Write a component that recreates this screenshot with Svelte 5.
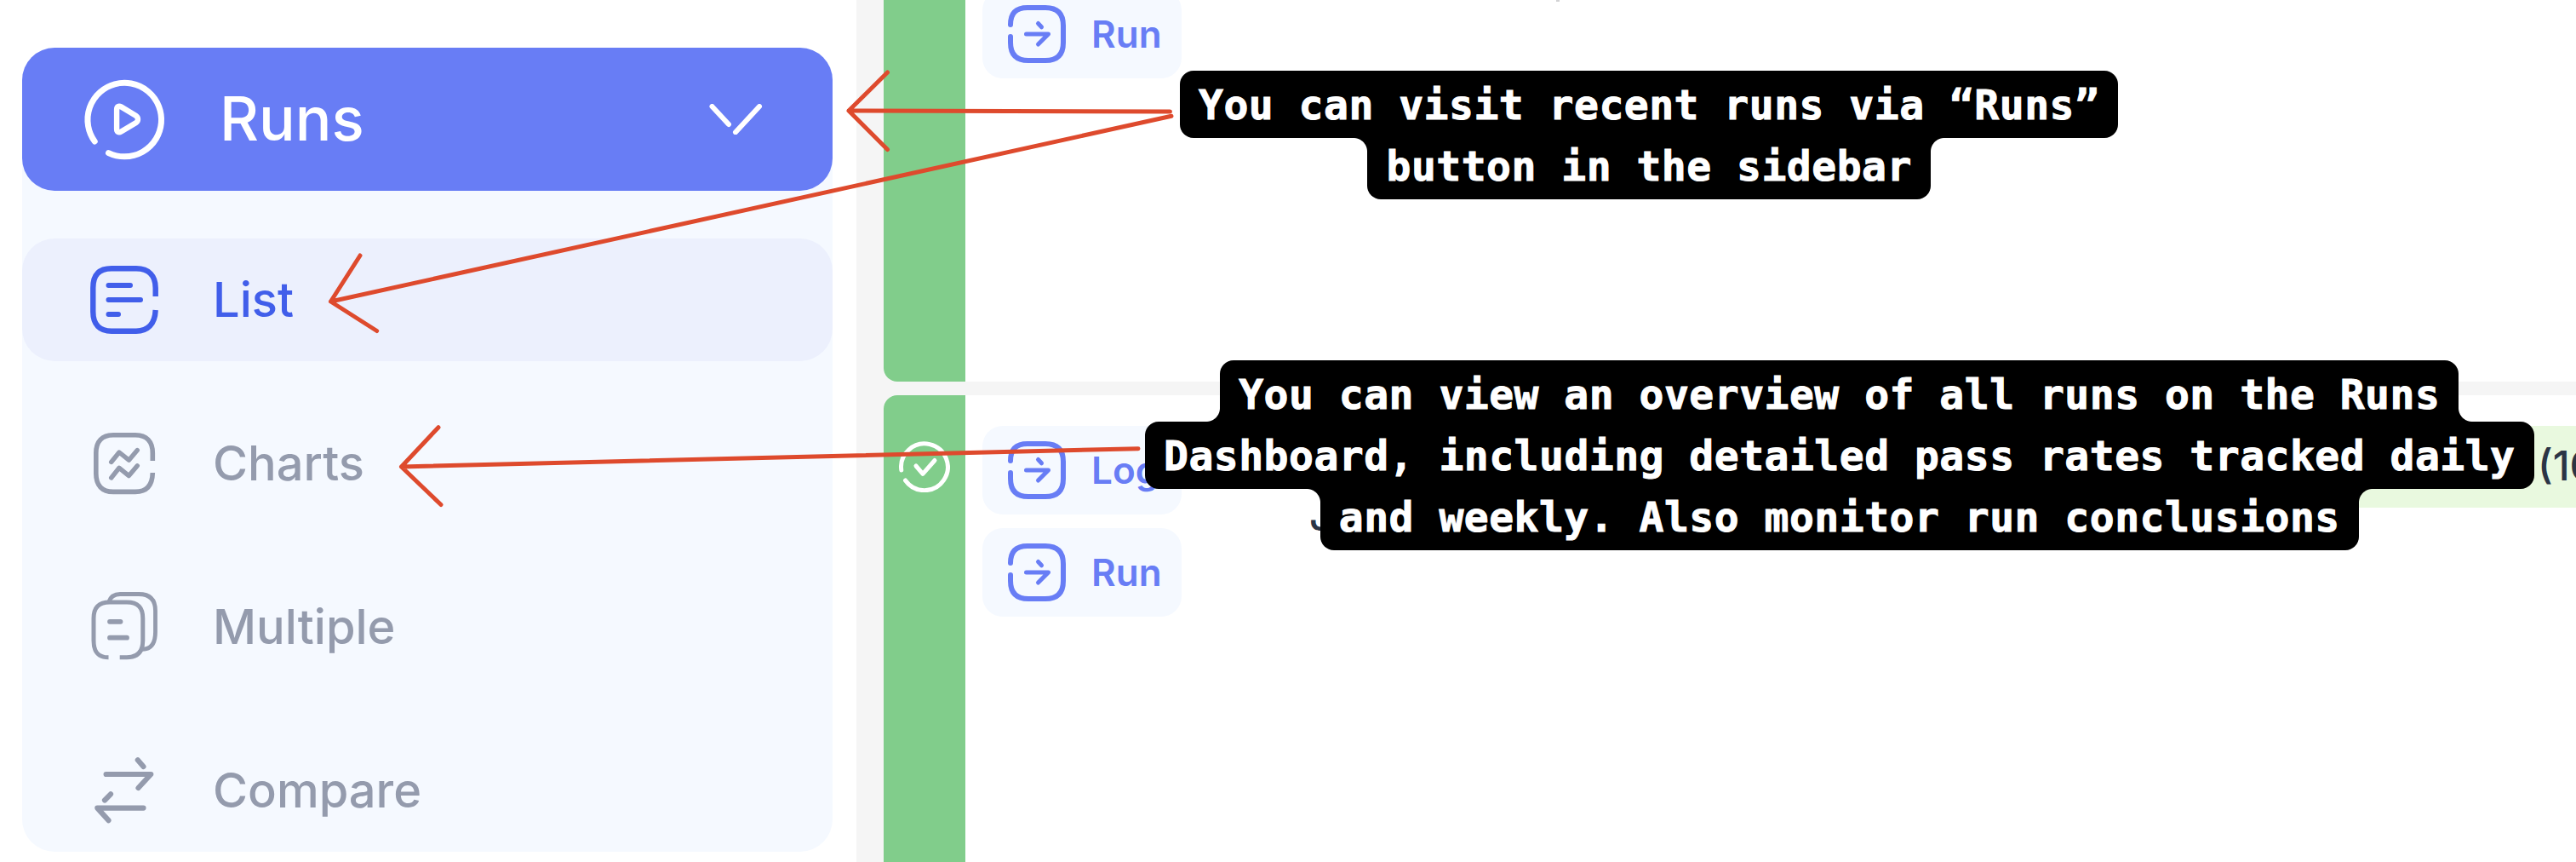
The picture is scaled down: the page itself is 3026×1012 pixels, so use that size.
<script>
  const items = [
    { name: 'List', icon: 'list', active: true },
    { name: 'Charts', icon: 'charts' },
    { name: 'Multiple', icon: 'multiple' },
    { name: 'Compare', icon: 'compare' }
  ];

  // shape of the joint between a line's plate and its neighbours: '', 'down' or 'up'
  const notes = [
    {
      id: 'visit',
      lines: [
        { text: 'You can visit recent runs via “Runs”', joint: '' },
        { text: 'button in the sidebar', joint: 'down' }
      ]
    },
    {
      id: 'overview',
      lines: [
        { text: 'You can view an overview of all runs on the Runs', joint: 'up' },
        { text: 'Dashboard, including detailed pass rates tracked daily', joint: '' },
        { text: 'and weekly. Also monitor run conclusions', joint: 'down' }
      ]
    }
  ];
</script>

{#snippet chip(label)}
  <div class="chip">
    <svg class="chip-icon" viewBox="0 0 68 68">
      <path d="M3 23C3 9 10 3 23 3H44C58 3 65 10 65 24V44C65 58 58 65 44 65H24C10 65 3 58 3 44V37" />
      <path class="thin" d="M21.5 34H47.5L35.5 46M35.5 21.5L39.5 25.8" />
    </svg>
    <span>{label}</span>
  </div>
{/snippet}

<div class="page">
  <aside class="sidebar">
    <nav class="menu">
      <div class="head">
        <svg class="icon" viewBox="0 0 96 96">
          <path stroke-width="7" d="M13.2 74A43.3 43.3 0 1 1 29.5 87.6" />
          <path stroke-width="6.4" d="M39.1 36.5C39.1 33 41.5 31.8 44.3 33.4L61.5 43.7C64.8 45.8 64.8 50.2 61.5 52.3L44.3 62.6C41.5 64.2 39.1 63 39.1 59.5Z" />
        </svg>
        <span class="head-label">Runs</span>
        <svg class="chevron" viewBox="0 0 66 36">
          <path d="M4.5 3L24 24M60 3L32 33.2" />
        </svg>
      </div>
      {#each items as item}
        <div class="item" class:active={item.active}>
          <svg class="icon" viewBox="0 0 96 96">
            {#if item.icon === 'list'}
              <path stroke-width="6.4" stroke-linecap="butt" d="M84.7 44V34C84.7 20 77 11.3 62 11.3H33C18 11.3 11.3 19 11.3 34V62C11.3 77 19 84.7 33 84.7H62C75 84.7 84 77 84.7 60" />
              <path stroke-width="6" d="M29.5 31H55M29.5 48H67M29.5 65H41" />
            {:else if item.icon === 'charts'}
              <path stroke-width="5.6" stroke-linecap="butt" d="M81.3 45V36C81.3 22 74 14.8 61 14.8H35C22 14.8 14.8 22 14.8 36V60C14.8 74 22 81.4 35 81.4H61C74 81.4 81 74 81.3 59" />
              <path stroke-width="5.4" d="M32.7 46.5L42 35L53.4 44.2L63.3 32.5M32.7 65L42 53.3L53.4 62.6L63.3 50.8" />
            {:else if item.icon === 'multiple'}
              <path stroke-width="5" stroke-linecap="butt" d="M29.5 83.8C17 83.8 12 77 12 64V38C12 25 18 19 31 19H51C64 19 69.8 25 69.8 38V64C69.8 77 64 83.8 51 83.8H42.7" />
              <path stroke-width="4.8" stroke-linecap="butt" d="M29.5 19C32 12 37 9.5 43 9.5H65C78 9.5 84.5 16 84.5 29V54C84.5 68 79 74.3 69 74.3" />
              <path stroke-width="5.8" d="M31 41.8H43.5M31 60.7H51" />
            {:else}
              <path stroke-width="6.2" d="M26.6 29H79.3L64.5 45M63.8 12.3L70.5 20M70.5 68.6H16.3L29.5 83.2M32 52.3L25 59.5" />
            {/if}
          </svg>
          <span>{item.name}</span>
        </div>
      {/each}
    </nav>
  </aside>

  <main class="runs">
    <section class="run first">
      <div class="status"></div>
      <div class="links">{@render chip('Run')}</div>
      <div class="mark"></div>
    </section>
    <section class="run second">
      <div class="status">
        <svg class="ok" viewBox="0 0 60 60">
          <path d="M2.8 34A27.4 27.4 0 1 1 7.5 46" />
          <path d="M20 29L28 38.3L42 22.5" />
        </svg>
      </div>
      <div class="links">
        {@render chip('Log')}
        {@render chip('Run')}
      </div>
      <div class="title">J</div>
      <div class="rate">(100%)</div>
    </section>
  </main>

  <svg class="arrows" viewBox="0 0 3026 1012">
    <path d="M1374.5 131L997 130M1042.5 85L997 130L1042.5 175.5" />
    <path d="M1376 136.3L388.5 354M423 300L388.5 354L442.7 388.5" />
    <path d="M1337 526.7L471.5 548M515 501.7L471.5 548L518 592.5" />
  </svg>

  {#each notes as note}
    <div class="note {note.id}">
      {#each note.lines as line}
        <div class="line {line.joint}">{line.text}</div>
      {/each}
    </div>
  {/each}
</div>

<style>
  .page {
    position: relative;
    display: flex;
    width: 3026px;
    height: 1012px;
    overflow: hidden;
    background: #fff;
    font-family: Inter, 'Liberation Sans', sans-serif;
  }
  svg {
    display: block;
    flex: none;
    fill: none;
    stroke: currentColor;
    stroke-linecap: round;
    stroke-linejoin: round;
  }

  .sidebar {
    box-sizing: border-box;
    flex: none;
    width: 1006px;
    padding: 56px 28px 12px 26px;
  }
  .menu {
    display: flex;
    flex-direction: column;
    gap: 48px;
    height: 944px;
    border-radius: 38px;
    background: #f5f9ff;
  }
  .head,
  .item {
    box-sizing: border-box;
    display: flex;
    align-items: center;
    flex: none;
    border-radius: 38px;
    padding-left: 72px;
    white-space: nowrap;
  }
  .head {
    height: 168px;
    margin-bottom: 8px;
    padding-right: 80px;
    background: #687df5;
    color: #fff;
    font-size: 71px;
    font-weight: 500;
    line-height: 88px;
  }
  .head-label {
    flex: 1;
    margin-left: 64px;
    padding-bottom: 3px;
  }
  .item {
    height: 144px;
    gap: 56px;
    color: #949bad;
    font-size: 56px;
    font-weight: 500;
    line-height: 68px;
  }
  .item.active {
    background: #ecf0fd;
    color: #415eea;
  }
  .icon {
    width: 96px;
    height: 96px;
  }
  .chevron {
    width: 66px;
    height: 36px;
    stroke-width: 6;
  }

  .runs {
    flex: 1;
    min-width: 0;
    display: flex;
    flex-direction: column;
    gap: 16px;
    padding-left: 32px;
    background: #f5f5f5;
  }
  .run {
    display: flex;
    overflow: hidden;
    background: #fff;
  }
  .first {
    height: 448px;
    border-bottom-left-radius: 16px;
  }
  .second {
    flex: 1;
    border-top-left-radius: 16px;
  }
  .status {
    box-sizing: border-box;
    flex: none;
    width: 96px;
    padding: 54px 18px 0;
    background: #81cd8b;
    color: #fff;
  }
  .ok {
    width: 60px;
    height: 60px;
    stroke-width: 5;
  }
  .links {
    flex: none;
    display: flex;
    flex-direction: column;
    gap: 16px;
    width: 234px;
    margin: 36px 0 0 20px;
  }
  .first .links {
    margin-top: -12px;
  }
  .mark {
    width: 4px;
    height: 2px;
    margin-left: 440px;
    background: #d2d2d4;
  }
  .chip {
    box-sizing: border-box;
    display: flex;
    align-items: center;
    gap: 30px;
    height: 104px;
    padding-left: 30px;
    border-radius: 24px;
    background: #f5f9ff;
    color: #687df5;
    font-size: 44px;
    font-weight: 600;
    line-height: 54px;
  }
  .chip-icon {
    width: 68px;
    height: 68px;
    stroke-width: 6;
  }
  .chip-icon .thin {
    stroke-width: 5;
  }
  .title {
    width: 60px;
    margin: 113px 0 0 150px;
    color: #2b3445;
    font-size: 48px;
    font-weight: 500;
    line-height: 58px;
  }
  .rate {
    box-sizing: border-box;
    flex: none;
    width: 400px;
    height: 96px;
    margin: 36px 0 0 auto;
    padding-left: 355px;
    background: #e9f9df;
    color: #2b3445;
    font-size: 48px;
    font-weight: 500;
    line-height: 93px;
    overflow: hidden;
  }

  .arrows {
    position: absolute;
    inset: 0;
    width: 3026px;
    height: 1012px;
    color: #de4a2d;
    stroke-width: 5;
  }

  .note {
    position: absolute;
    display: flex;
    flex-direction: column;
    align-items: center;
    color: #fff;
    font: bold 48px/72px 'DejaVu Sans Mono', monospace;
    letter-spacing: 0.5px;
    white-space: pre;
    -webkit-text-stroke: 1px #fff;
  }
  .visit {
    top: 83px;
    left: 1386px;
  }
  .overview {
    top: 423px;
    left: 1345px;
  }
  .line {
    position: relative;
    box-sizing: border-box;
    height: 79px;
    padding: 4px 22px 3px;
    border-radius: 16px;
    background: #000;
  }
  .line + .line {
    margin-top: -7px;
  }
  .down {
    border-top-left-radius: 0;
    border-top-right-radius: 0;
  }
  .up {
    border-bottom-left-radius: 0;
    border-bottom-right-radius: 0;
  }
  /* inward-curving corners where a narrower plate meets a wider one */
  .down::before,
  .down::after,
  .up::before,
  .up::after {
    content: '';
    position: absolute;
    width: 16px;
    height: 16px;
  }
  .down::before,
  .down::after {
    top: 7px;
  }
  .up::before,
  .up::after {
    bottom: 7px;
  }
  .down::before,
  .up::before {
    right: 100%;
  }
  .down::after,
  .up::after {
    left: 100%;
  }
  .down::before {
    background: radial-gradient(circle at 0 100%, transparent 15.5px, #000 16.5px);
  }
  .down::after {
    background: radial-gradient(circle at 100% 100%, transparent 15.5px, #000 16.5px);
  }
  .up::before {
    background: radial-gradient(circle at 0 0, transparent 15.5px, #000 16.5px);
  }
  .up::after {
    background: radial-gradient(circle at 100% 0, transparent 15.5px, #000 16.5px);
  }
</style>
